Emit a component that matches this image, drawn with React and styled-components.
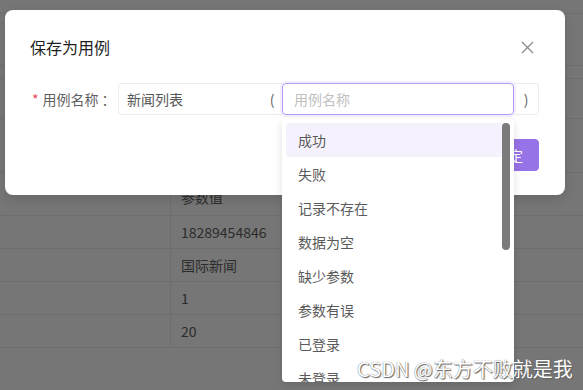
import React from 'react';
import styled, { createGlobalStyle } from 'styled-components';

const GlobalStyle = createGlobalStyle`
  html, body {
    margin: 0;
    padding: 0;
  }
  body {
    font-family: "Noto Sans CJK SC", "Noto Sans", sans-serif;
    font-size: 14px;
  }
`;

const Page = styled.div`
  position: relative;
  width: 583px;
  height: 390px;
  overflow: hidden;
  background: #767676;
`;

const Table = styled.div`
  display: flex;
  flex-direction: column;
  padding-top: 13px;
`;

const Row = styled.div`
  display: flex;
  height: ${p => p.h}px;
  border-top: 1px solid #6d6d6d;
  box-sizing: border-box;
`;

const LeftCell = styled.div`
  width: 170px;
  border-right: ${p => (p.divided ? '1px solid #6d6d6d' : 'none')};
`;

const RightCell = styled.div`
  flex: 1;
  display: flex;
  align-items: ${p => (p.bottom ? 'flex-end' : 'center')};
  padding: 0 0 ${p => (p.bottom ? 8 : 0)}px 10px;
  color: #2c2c2c;
  font-size: 14px;
`;

const Modal = styled.div`
  position: absolute;
  left: 5px;
  top: 10px;
  width: 560px;
  height: 185px;
  background: #fff;
  border-radius: 8px;
  box-shadow: 0 4px 12px rgba(0, 0, 0, 0.12);
  box-sizing: border-box;
  padding: 26px 26px 0 25px;
`;

const Header = styled.div`
  display: flex;
  align-items: center;
  justify-content: space-between;
  height: 22px;
`;

const Title = styled.div`
  font-size: 16px;
  color: #1f1f1f;
  line-height: 22px;
`;

const Close = styled.div`
  width: 16px;
  height: 16px;
  margin-right: 4px;
  display: flex;
  align-items: center;
  justify-content: center;
`;

const FormRow = styled.div`
  display: flex;
  align-items: center;
  margin-top: 25px;
`;

const Label = styled.div`
  width: 86px;
  color: #5f5f5f;
  font-size: 14px;
  white-space: nowrap;
  padding-left: 2px;
`;

const Star = styled.span`
  color: #e8485e;
  margin-right: 4px;
`;

const Colon = styled.span`
  margin-left: 3px;
`;

const Group = styled.div`
  flex: 1;
  display: flex;
  height: 32px;
`;

const Field = styled.div`
  box-sizing: border-box;
  height: 32px;
  display: flex;
  align-items: center;
  padding: 0 ${p => (p.focused ? 11 : 8)}px;
  flex: ${p => (p.grow ? 1 : 'none')};
  width: ${p => (p.w ? `${p.w}px` : 'auto')};
  color: ${p => (p.placeholder ? '#c0c0c0' : '#575757')};
  border: 1px solid ${p => (p.focused ? '#b59cf6' : '#ececec')};
  border-right: ${p => (p.noRight ? 'none' : undefined)};
  border-radius: ${p => p.radius || '0'};
  box-shadow: ${p => (p.focused ? '0 0 0 2px rgba(150, 112, 232, 0.12)' : 'none')};
`;

const Addon = styled.div`
  box-sizing: border-box;
  height: 32px;
  width: ${p => p.w}px;
  display: flex;
  align-items: center;
  justify-content: center;
  color: #666;
  border-top: 1px solid #ececec;
  border-bottom: 1px solid #ececec;
  border-right: ${p => (p.last ? '1px solid #ececec' : 'none')};
  border-radius: ${p => (p.last ? '0 4px 4px 0' : '0')};
`;

const Footer = styled.div`
  display: flex;
  justify-content: flex-end;
  gap: 8px;
  margin-top: 24px;
`;

const Button = styled.div`
  height: 32px;
  padding: 0 15px;
  box-sizing: border-box;
  display: flex;
  align-items: center;
  border-radius: 4px;
  font-size: 14px;
  background: ${p => (p.primary ? '#9673e6' : '#fff')};
  color: ${p => (p.primary ? '#fff' : '#555')};
  border: 1px solid ${p => (p.primary ? '#9673e6' : '#dcdcdc')};
`;

const Dropdown = styled.div`
  position: absolute;
  left: 282px;
  top: 119px;
  width: 232px;
  height: 263px;
  background: #fff;
  border-radius: 4px;
  box-shadow: 0 3px 8px rgba(0, 0, 0, 0.12);
  box-sizing: border-box;
  padding: 4px;
  overflow: hidden;
`;

const Item = styled.div`
  height: 34px;
  display: flex;
  align-items: center;
  padding: 0 12px;
  border-radius: 4px;
  color: #5a5a5a;
  font-size: 14px;
  background: ${p => (p.active ? '#f5f2fd' : 'transparent')};
`;

const Scrollbar = styled.div`
  position: absolute;
  right: 4px;
  top: 4px;
  width: 8px;
  height: 127px;
  border-radius: 4px;
  background: #7b7b7b;
`;

const Watermark = styled.div`
  position: absolute;
  left: 357px;
  top: 355px;
  font-size: 20px;
  line-height: 28px;
  color: #fff;
  font-family: "Noto Sans CJK SC", sans-serif;
  text-shadow: 0 0 1px #555, 1px 1px 1px #666;
  white-space: nowrap;
`;

const rows = [
  { h: 52, text: '' },
  { h: 13, text: '' },
  { h: 40, text: '' },
  { h: 54, text: '' },
  { h: 43, text: '参数值', divided: true, bottom: true },
  { h: 33, text: '18289454846', divided: true },
  { h: 33, text: '国际新闻', divided: true },
  { h: 33, text: '1', divided: true },
  { h: 33, text: '20', divided: true },
  { h: 60, text: '' },
];

const options = ['成功', '失败', '记录不存在', '数据为空', '缺少参数', '参数有误', '已登录', '未登录'];

export default function App() {
  return (
    <Page>
      <GlobalStyle />
      <Table>
        {rows.map((r, i) => (
          <Row key={i} h={r.h}>
            <LeftCell divided={r.divided} />
            <RightCell bottom={r.bottom}>{r.text}</RightCell>
          </Row>
        ))}
      </Table>

      <Modal>
        <Header>
          <Title>保存为用例</Title>
          <Close>
            <svg width="13" height="13" viewBox="0 0 13 13">
              <path d="M1 1L12 12M12 1L1 12" stroke="#8a8a8a" strokeWidth="1.3" />
            </svg>
          </Close>
        </Header>
        <FormRow>
          <Label>
            <Star>*</Star>用例名称<Colon>：</Colon>
          </Label>
          <Group>
            <Field grow noRight radius="4px 0 0 4px">新闻列表</Field>
            <Addon w={20}>(</Addon>
            <Field w={232} focused placeholder radius="4px">用例名称</Field>
            <Addon w={25} last>)</Addon>
          </Group>
        </FormRow>
        <Footer>
          <Button>取消</Button>
          <Button primary>确定</Button>
        </Footer>
      </Modal>

      <Dropdown>
        {options.map((o, i) => (
          <Item key={o} active={i === 0}>{o}</Item>
        ))}
        <Scrollbar />
      </Dropdown>

      <Watermark>CSDN @东方不败就是我</Watermark>
    </Page>
  );
}
